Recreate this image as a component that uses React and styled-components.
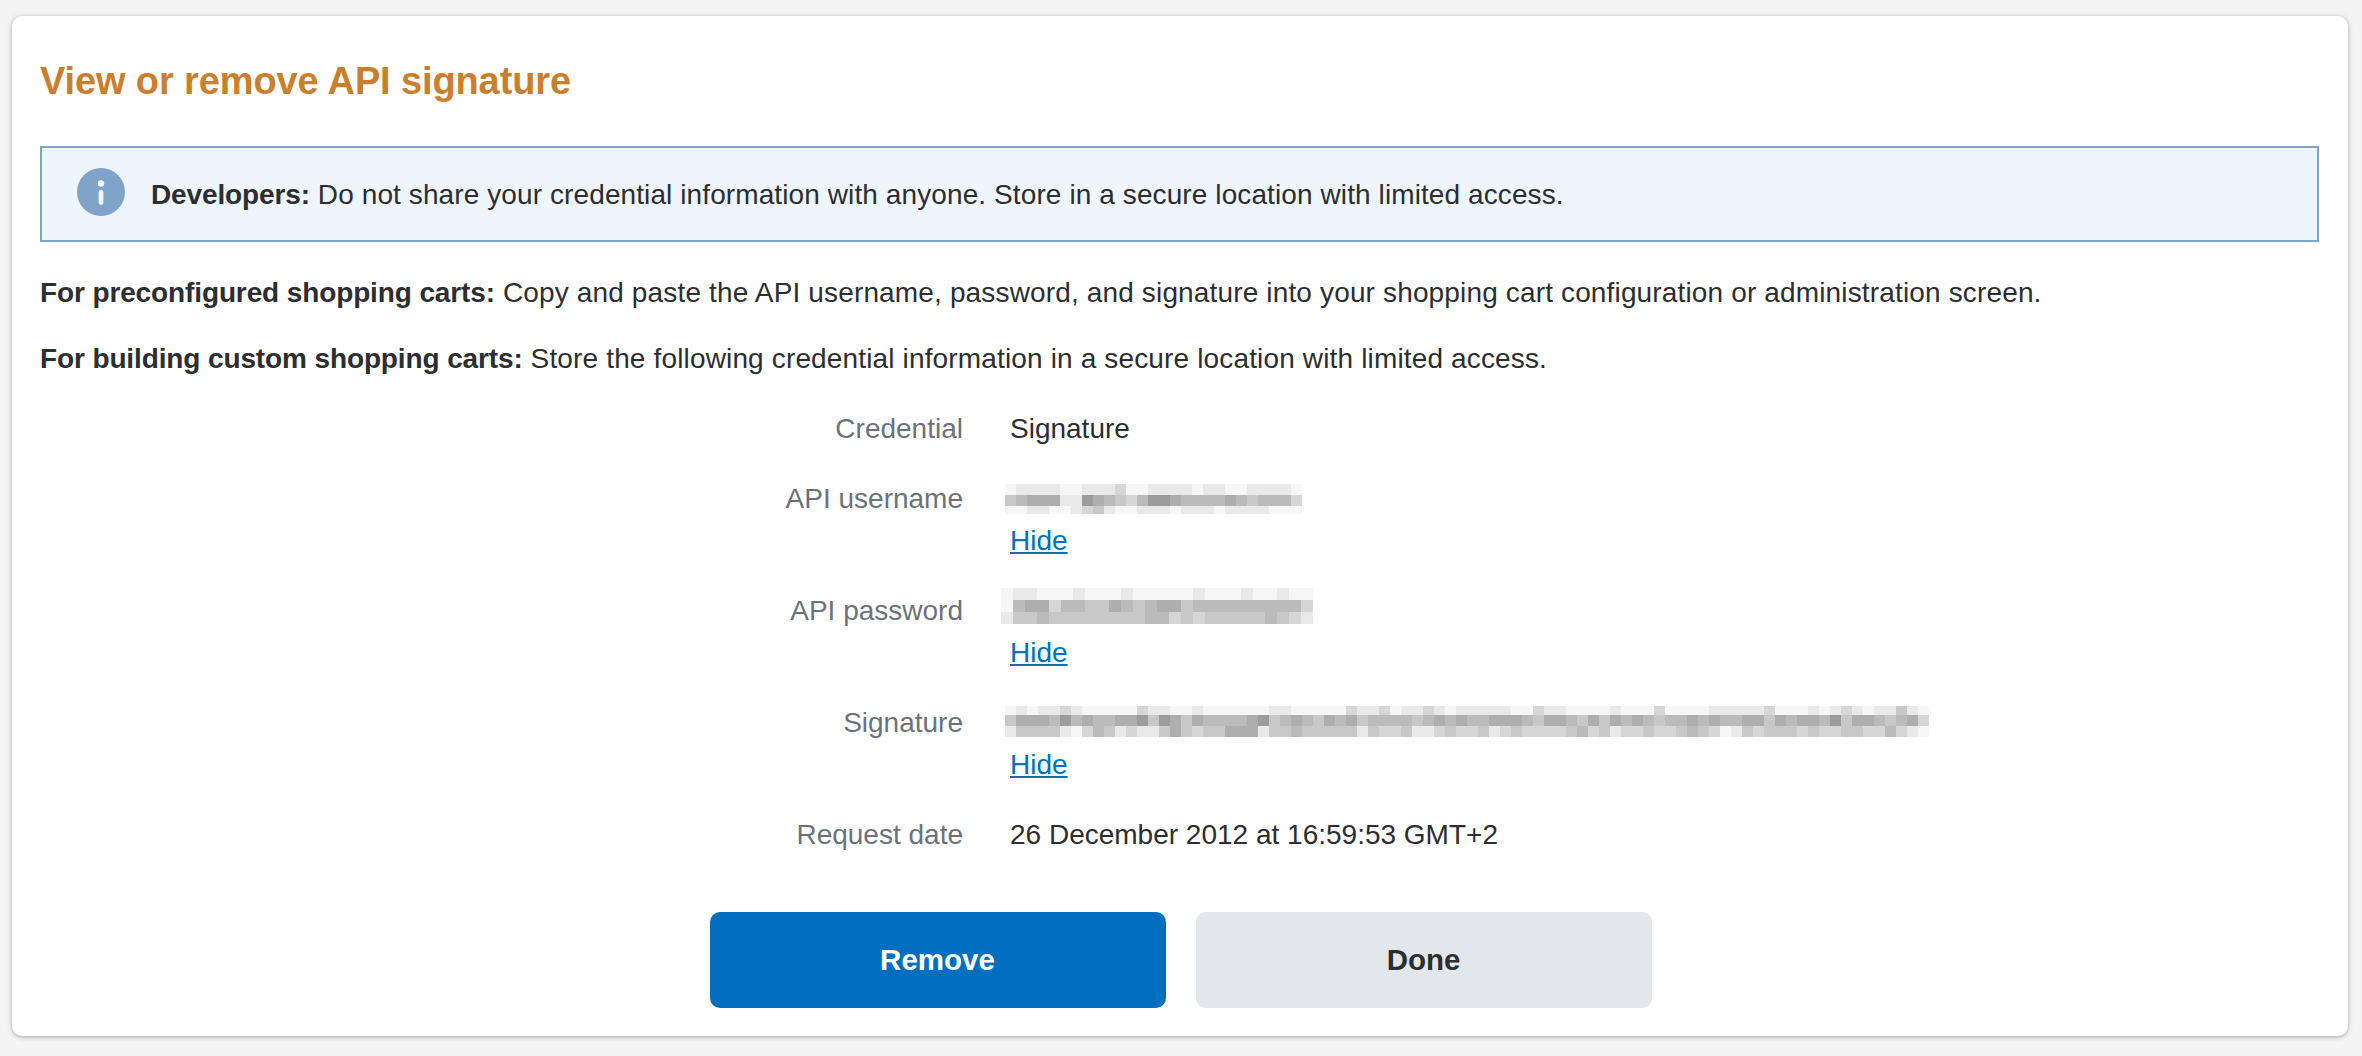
import React from "react";
import styled, { createGlobalStyle } from "styled-components";

const GlobalStyle = createGlobalStyle`
  html, body {
    margin: 0;
    padding: 0;
    background: #f4f4f4;
    font-family: "Liberation Sans", Arial, sans-serif;
    color: #2c2e2f;
  }
`;

const Page = styled.div`
  padding: 16px 14px 20px 12px;
`;

const Card = styled.section`
  background: #fff;
  border-radius: 10px;
  box-shadow: 0 1px 5px rgba(0, 0, 0, 0.32);
  padding: 45px 29px 28px 28px;
`;

const Title = styled.h1`
  margin: 0 0 45px;
  font-size: 38px;
  line-height: 40px;
  font-weight: 700;
  letter-spacing: -0.12px;
  color: #ca7f2d;
`;

const Alert = styled.div`
  display: flex;
  align-items: center;
  gap: 26px;
  height: 96px;
  box-sizing: border-box;
  padding-left: 35px;
  margin-bottom: 33px;
  background: #eff5fd;
  border: 2px solid #7fa3c9;
  font-size: 28px;
  line-height: 36px;
  letter-spacing: 0.1px;
`;

const AlertIcon = styled.svg`
  margin-bottom: 4px;
`;

const AlertText = styled.span`
  padding-top: 2px;
`;

const Paragraph = styled.p`
  margin: 0 0 30px;
  font-size: 28px;
  line-height: 36px;
  letter-spacing: 0.15px;
`;

const Strong = styled.b`
  letter-spacing: -0.12px;
`;

const Details = styled.dl`
  display: grid;
  grid-template-columns: 923px 1fr;
  column-gap: 47px;
  row-gap: 34px;
  margin: 34px 0 59px;
  font-size: 28px;
  line-height: 36px;
`;

const Label = styled.dt`
  text-align: right;
  color: #6c7378;
`;

const Value = styled.dd`
  margin: 0;
`;

const Secret = styled.svg`
  display: block;
  margin: ${(p) => p.$top}px 0 ${(p) => p.$bottom}px ${(p) => p.$left}px;
`;

const HideLink = styled.a`
  display: block;
  width: fit-content;
  color: #0070ba;
  text-decoration: underline;
`;

const Actions = styled.div`
  display: flex;
  justify-content: center;
  gap: 30px;
  padding-left: 2px;
`;

const Button = styled.button`
  width: 456px;
  height: 96px;
  border: 0;
  border-radius: 10px;
  font-family: inherit;
  font-size: 29.5px;
  font-weight: 700;
  background: ${(p) => (p.$primary ? "#006fbf" : "#e1e7eb")};
  color: ${(p) => (p.$primary ? "#fff" : "#2c2e2f")};
`;

// pixelated redactions: one digit per cell, looked up in SHADES
const SHADES = { 9: 0x9c, a: 0xae, b: 0xbb, c: 0xc8, d: 0xd6, e: 0xe9, f: 0xf6 };

const USERNAME = [
  "feeeeffeeedffeeeefeeffeeeef",
  "cbaaaee9abcdb99abbbbabcbbbd",
  "ffeeffedceffeeefeeefeeeefff",
];

const PASSWORD = [
  "feefffefffefffffefffeffeff",
  "fbaadbbccabcbaacbbbbbbbbbd",
  "eccbccccccccbbdcdcccccbcde",
];

const SIGNATURE = [
  "fefeedefffffdeeffeffffffeeff" + "fffdeedfeedefeeeeeffdeeffffe" + "fffdffffeeeeedfffefedefeecef",
  "caaab9babbaa9c9acabbbba9cbab" + "cabacbbbbcbababbaaabcaabcaca" + "babcbbababbaacabaab9caabcbad",
  "eccccefdbcedeecacdccaaaeccbc" + "ccccecddceedcddcedcddddcbdce" + "ddcddcbcdfecdcccdcddccddbdef",
];

function Mosaic({ rows, cellW, heights, left = 0, top = 0, bottom = 0 }) {
  const w = rows[0].length * cellW;
  const h = heights.reduce((a, b) => a + b, 0);
  let y = 0;
  return (
    <Secret $left={left} $top={top} $bottom={bottom} width={w} height={h} shapeRendering="crispEdges">
      {rows.map((row, r) => {
        const rowY = y;
        y += heights[r];
        return row.split("").map((c, x) => {
          const d = SHADES[c];
          return (
            <rect
              key={x + "-" + r}
              x={x * cellW}
              y={rowY}
              width={cellW}
              height={heights[r]}
              fill={`rgb(${d},${d},${d})`}
            />
          );
        });
      })}
    </Secret>
  );
}

function InfoIcon() {
  return (
    <AlertIcon width="48" height="48" viewBox="0 0 48 48">
      <circle cx="24" cy="24" r="24" fill="#7fa3c9" />
      <circle cx="24" cy="15.5" r="3.2" fill="#eff5fd" />
      <rect x="21.6" y="22" width="4.8" height="15" rx="2.4" fill="#eff5fd" />
    </AlertIcon>
  );
}

export default function App() {
  return (
    <Page>
      <GlobalStyle />
      <Card>
        <Title>View or remove API signature</Title>
        <Alert>
          <InfoIcon />
          <AlertText>
            <Strong>Developers:</Strong> Do not share your credential information with anyone. Store in a
            secure location with limited access.
          </AlertText>
        </Alert>
        <Paragraph>
          <Strong>For preconfigured shopping carts:</Strong> Copy and paste the API username, password, and
          signature into your shopping cart configuration or administration screen.
        </Paragraph>
        <Paragraph>
          <Strong>For building custom shopping carts:</Strong> Store the following credential information in
          a secure location with limited access.
        </Paragraph>
        <Details>
          <Label>Credential</Label>
          <Value>Signature</Value>
          <Label>API username</Label>
          <Value>
            <Mosaic rows={USERNAME} cellW={11} heights={[11, 11, 8]} left={-5} top={3} bottom={9} />
            <HideLink href="#">Hide</HideLink>
          </Value>
          <Label>API password</Label>
          <Value>
            <Mosaic rows={PASSWORD} cellW={12} heights={[12, 12, 12]} left={-9} top={-5} bottom={11} />
            <HideLink href="#">Hide</HideLink>
          </Value>
          <Label>Signature</Label>
          <Value>
            <Mosaic rows={SIGNATURE} cellW={11} heights={[9, 11, 11]} left={-5} top={1} bottom={10} />
            <HideLink href="#">Hide</HideLink>
          </Value>
          <Label>Request date</Label>
          <Value>26 December 2012 at 16:59:53 GMT+2</Value>
        </Details>
        <Actions>
          <Button $primary>Remove</Button>
          <Button>Done</Button>
        </Actions>
      </Card>
    </Page>
  );
}
